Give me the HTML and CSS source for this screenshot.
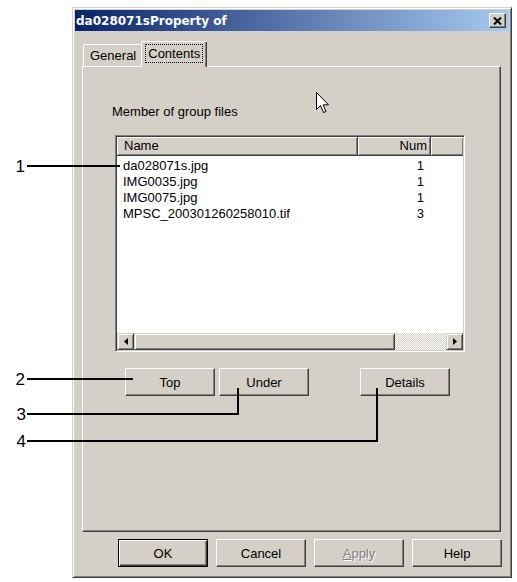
FILE: index.html
```html
<!DOCTYPE html>
<html>
<head>
<meta charset="utf-8">
<title>da028071sProperty of</title>
<link rel="stylesheet" href="styles.css">
</head>
<body>
<div class="stage">
  <div class="dialog">
    <div class="titlebar">
      <span class="title">da028071sProperty of</span>
      <span class="close"><svg width="9" height="8" viewBox="0 0 9 8"><path d="M1 0.5 L8 7.5 M8 0.5 L1 7.5" stroke="#000" stroke-width="2" fill="none"/></svg></span>
    </div>
    <div class="tabs">
      <div class="tab">General</div>
      <div class="tab active"><span class="focus">Contents</span></div>
    </div>
    <div class="panel">
      <div class="label">Member of group files</div>
      <div class="list">
        <div class="header">
          <div class="hcell h-name">Name</div>
          <div class="hcell h-num">Num</div>
          <div class="hcell h-rest"></div>
        </div>
        <div class="rows">
          <div class="row"><span class="c-name">da028071s.jpg</span><span class="c-num">1</span></div>
          <div class="row"><span class="c-name">IMG0035.jpg</span><span class="c-num">1</span></div>
          <div class="row"><span class="c-name">IMG0075.jpg</span><span class="c-num">1</span></div>
          <div class="row"><span class="c-name">MPSC_200301260258010.tif</span><span class="c-num">3</span></div>
        </div>
        <div class="hscroll">
          <div class="sbtn"><svg width="4" height="7" viewBox="0 0 4 7"><path d="M4 0 L0 3.5 L4 7 Z" fill="#000"/></svg></div>
          <div class="thumb"></div>
          <div class="track"></div>
          <div class="sbtn"><svg width="4" height="7" viewBox="0 0 4 7"><path d="M0 0 L4 3.5 L0 7 Z" fill="#000"/></svg></div>
        </div>
      </div>
      <div class="actions">
        <button class="btn">Top</button>
        <button class="btn under">Under</button>
        <button class="btn details">Details</button>
      </div>
    </div>
    <div class="footer">
      <button class="btn default">OK</button>
      <button class="btn">Cancel</button>
      <button class="btn disabled"><span><u>A</u>pply</span></button>
      <button class="btn">Help</button>
    </div>
  </div>

  <svg class="callouts" width="517" height="582" viewBox="0 0 517 582">
    <g stroke="#000" stroke-width="2" fill="none">
      <path d="M27 166 H120"/>
      <path d="M27 379 H133"/>
      <path d="M27 414 H238 V388"/>
      <path d="M27 441 H377 V388"/>
    </g>
    <g class="nums" fill="#000">
      <text x="25" y="172" text-anchor="end">1</text>
      <text x="25" y="385" text-anchor="end">2</text>
      <text x="26" y="420" text-anchor="end">3</text>
      <text x="26" y="447" text-anchor="end">4</text>
    </g>
  </svg>

  <svg class="cursor" width="14" height="23" viewBox="0 0 14 23">
    <path d="M0.5 0.5 V17.5 L4.5 13.5 L7.5 20.5 L10 19.5 L7.2 12.8 L12.5 12.8 Z" fill="#fff" stroke="#000" stroke-width="1"/>
  </svg>
</div>
</body>
</html>
```

FILE: styles.css
```css
* { box-sizing: border-box; }

body {
  margin: 0;
  background: #fff;
  font-family: "Liberation Sans", Arial, sans-serif;
  font-size: 13px;
  color: #000;
}

.stage {
  position: relative;
  width: 517px;
  height: 582px;
  padding: 7px 0 0 72px;
  overflow: hidden;
}

.dialog {
  width: 440px;
  height: 571px;
  background: #d4d0c8;
  border: 1px solid;
  border-color: #d4d0c8 #404040 #404040 #d4d0c8;
  box-shadow: inset 1px 1px #fff, inset -1px -1px #808080;
  padding: 2px;
  display: flex;
  flex-direction: column;
}

.titlebar {
  height: 21px;
  flex: none;
  background: linear-gradient(to right, #0a246a, #a6caf0);
  display: flex;
  align-items: center;
  justify-content: space-between;
  padding: 0 3px 0 1px;
}

.title {
  color: #fff;
  font: bold 12px "DejaVu Sans", Verdana, sans-serif;
}

.close {
  width: 17px;
  height: 15px;
  background: #d4d0c8;
  border: 1px solid;
  border-color: #fff #404040 #404040 #fff;
  box-shadow: inset -1px -1px #808080;
  display: flex;
  align-items: center;
  justify-content: center;
}

.tabs {
  display: flex;
  align-items: flex-end;
  height: 25px;
  margin-top: 10px;
  padding-left: 8px;
  flex: none;
}

.tab {
  height: 22px;
  padding: 0 6px;
  border: 1px solid;
  border-bottom: none;
  border-color: #fff #404040 transparent #fff;
  box-shadow: inset -1px 0 #808080;
  border-radius: 2px 2px 0 0;
  display: flex;
  align-items: center;
  background: #d4d0c8;
}

.tab.active {
  height: 26px;
  margin-bottom: -1px;
  margin-left: -2px;
  padding: 0 3px 2px 3px;
  position: relative;
  z-index: 1;
}

.focus {
  border: 1px dotted #000;
  padding: 1px 2px;
  line-height: 15px;
}

.panel {
  margin-left: 7px;
  width: 419px;
  height: 466px;
  flex: none;
  border: 1px solid;
  border-color: #fff #404040 #404040 #fff;
  box-shadow: inset -1px -1px #808080;
}

.label {
  margin: 37px 0 0 29px;
  line-height: 15px;
}

.list {
  margin: 16px 0 0 32px;
  width: 350px;
  height: 217px;
  border: 1px solid;
  border-color: #808080 #fff #fff #808080;
  box-shadow: inset 1px 1px #404040, inset -1px -1px #d4d0c8;
  padding: 1px;
  background: #fff;
  display: flex;
  flex-direction: column;
}

.header {
  display: flex;
  height: 19px;
  flex: none;
}

.hcell {
  background: #d4d0c8;
  border-right: 1px solid #404040;
  border-bottom: 1px solid #404040;
  box-shadow: inset 1px 1px #fff, inset -1px -1px #808080;
  line-height: 18px;
}

.h-name { width: 241px; padding-left: 7px; }
.h-num { width: 73px; text-align: right; padding-right: 3px; }
.h-rest { flex: 1; border-right: none; }

.rows {
  flex: 1;
  padding-top: 2px;
}

.row {
  display: flex;
  height: 16px;
  line-height: 16px;
}

.c-name { width: 241px; padding-left: 6px; }
.c-num { width: 73px; text-align: right; padding-right: 7px; }

.hscroll {
  display: flex;
  height: 17px;
  flex: none;
}

.sbtn, .thumb {
  background: #d4d0c8;
  border: 1px solid;
  border-color: #d4d0c8 #404040 #404040 #d4d0c8;
  box-shadow: inset 1px 1px #fff, inset -1px -1px #808080;
}

.sbtn {
  width: 17px;
  display: flex;
  align-items: center;
  justify-content: center;
}

.thumb { width: 261px; }

.track {
  flex: 1;
  background-color: #fff;
  background-image: repeating-conic-gradient(#d4d0c8 0% 25%, #fff 0% 50%);
  background-size: 2px 2px;
}

.actions {
  display: flex;
  margin: 16px 0 0 42px;
}

.btn {
  width: 90px;
  height: 28px;
  padding: 0;
  margin: 0;
  background: #d4d0c8;
  border: 1px solid;
  border-color: #fff #404040 #404040 #fff;
  box-shadow: inset -1px -1px #808080;
  font: 13px "Liberation Sans", Arial, sans-serif;
  color: #000;
  display: flex;
  align-items: center;
  justify-content: center;
}

.under { margin-left: 4px; }
.details { margin-left: 51px; }

.footer {
  display: flex;
  justify-content: flex-end;
  gap: 8px;
  margin-top: 7px;
  padding-right: 7px;
  flex: none;
}

.btn.default {
  border-color: #000;
  box-shadow: inset 1px 1px #fff, inset -1px -1px #404040, inset -2px -2px #808080;
}

.btn.disabled {
  color: #808080;
  text-shadow: 1px 1px #fff;
}

.callouts {
  position: absolute;
  left: 0;
  top: 0;
  pointer-events: none;
}

.nums text {
  font: 17px "Liberation Sans", Arial, sans-serif;
}

.cursor {
  position: absolute;
  left: 316px;
  top: 92px;
}
```
